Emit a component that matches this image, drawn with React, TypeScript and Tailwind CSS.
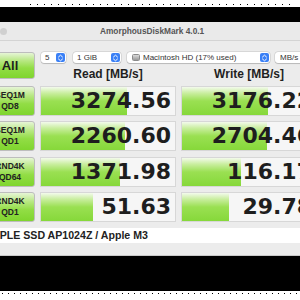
import React from "react";

const rows = [
  { l1: "SEQ1M", l2: "QD8", r: "3274.56", rw: 86, w: "3176.22", ww: 86 },
  { l1: "SEQ1M", l2: "QD1", r: "2260.60", rw: 84, w: "2704.46", ww: 85 },
  { l1: "RND4K", l2: "QD64", r: "1371.98", rw: 79, w: "116.17", ww: 59 },
  { l1: "RND4K", l2: "QD1", r: "51.63", rw: 52, w: "29.78", ww: 47 },
];

function Stepper() {
  return (
    <div className="w-[9px] h-[9px] rounded-[2px] bg-[#3a80f6] flex items-center justify-center shrink-0">
      <svg width="7" height="8" viewBox="0 0 7 8" fill="none">
        <path d="M1.5 3 L3.5 1.2 L5.5 3" stroke="white" strokeWidth="1" strokeLinecap="round" strokeLinejoin="round" />
        <path d="M1.5 5 L3.5 6.8 L5.5 5" stroke="white" strokeWidth="1" strokeLinecap="round" strokeLinejoin="round" />
      </svg>
    </div>
  );
}

function Cell({ value, bar }: { value: string; bar: number }) {
  return (
    <div className="grid h-[30px] border border-[#d7d7d7] bg-[#f6f6f6]">
      <div className="col-start-1 row-start-1 h-full bg-[linear-gradient(to_bottom,#f3faec_0%,#c9ee9f_22%,#9ae052_50%,#86d83a_100%)]" style={{ width: bar }} />
      <div className="col-start-1 row-start-1 flex items-center justify-end pr-[4px] font-['DejaVu_Sans',sans-serif] font-bold text-[22px] leading-none text-[#1e1e1e] whitespace-nowrap">
        {value}
      </div>
    </div>
  );
}

const selectCls =
  "h-[11px] shrink-0 bg-white rounded-[3px] shadow-[0_0_0_0.5px_rgba(0,0,0,0.15),0_0.5px_1px_rgba(0,0,0,0.15)] flex items-center";

export default function App() {
  return (
    <div className="w-[300px] h-[300px] overflow-hidden bg-white flex flex-col font-['Liberation_Sans',Arial,sans-serif]">
      <div className="h-[7px] shrink-0 pt-[4px]">
        <div className="h-[1px] bg-[repeating-linear-gradient(90deg,#000_0px,#000_1px,transparent_1px,transparent_7px)] ml-[30px] mr-[4px]" />
      </div>
      <div className="h-[15px] shrink-0 bg-black" />
      <div className="ml-[-22px] w-[360px] shrink-0 bg-[#ececec] border-b border-[#c9c9c9]">
        <div className="h-[19px] flex items-center border-b border-[#d4d4d4] bg-[#eaeaea]">
          <div className="ml-[22px] w-[7px] h-[7px] rounded-full bg-[#d0d0d0] shrink-0" />
          <span className="ml-[93px] text-[8.3px] font-bold text-[#555] whitespace-nowrap">AmorphousDiskMark 4.0.1</span>
        </div>
        <div className="pl-[7px] pt-[11px] pb-[12px]">
          <div className="flex gap-[5px]">
            <div className="w-[50px] h-[27px] shrink-0 rounded-[3px] border border-[#bdbdbd] bg-[linear-gradient(to_bottom,#e6f5d6_0%,#b9e885_30%,#92dd45_60%,#7fd52e_100%)] flex items-center justify-center text-[13px] font-bold text-[#1f1f1f]">
              All
            </div>
            <div className="flex flex-col w-[277px] shrink-0">
              <div className="flex h-[11px] pl-[1px] text-[8px] text-[#333]">
                <div className={`${selectCls} w-[25px] justify-between pl-[4px] pr-[1px]`}>
                  <span>5</span>
                  <Stepper />
                </div>
                <div className={`${selectCls} ml-[7px] w-[48px] justify-between pl-[4px] pr-[1px]`}>
                  <span>1 GiB</span>
                  <Stepper />
                </div>
                <div className={`${selectCls} ml-[6px] w-[143px] justify-between pl-[5px] pr-[1px]`}>
                  <span className="flex items-center gap-[3px] whitespace-nowrap">
                    <span className="w-[8px] h-[7px] rounded-[1.5px] bg-[linear-gradient(to_bottom,#d9d9d9,#9a9a9a)] border border-[#8a8a8a]" />
                    Macintosh HD (17% used)
                  </span>
                  <Stepper />
                </div>
                <div className={`${selectCls} ml-[5px] w-[60px] pl-[5px]`}>
                  <span>MB/s</span>
                </div>
              </div>
              <div className="grid grid-cols-[136px_136px] gap-x-[5px] mt-[4px] h-[14px] text-[12px] leading-[14px] font-bold text-[#1f1f1f]">
                <div className="text-center">Read [MB/s]</div>
                <div className="text-center">Write [MB/s]</div>
              </div>
            </div>
          </div>
          <div className="mt-[5px] grid grid-cols-[50px_136px_136px] gap-x-[5px] gap-y-[5.33px]">
            {rows.map((r, i) => (
              <React.Fragment key={i}>
                <div className="h-[30px] rounded-[3px] border border-[#bdbdbd] bg-[linear-gradient(to_bottom,#e6f5d6_0%,#b9e885_30%,#92dd45_60%,#7fd52e_100%)] flex flex-col items-center justify-center text-[8.5px] leading-[11px] font-bold text-[#222]">
                  <span>{r.l1}</span>
                  <span>{r.l2}</span>
                </div>
                <Cell value={r.r} bar={r.rw} />
                <Cell value={r.w} bar={r.ww} />
              </React.Fragment>
            ))}
          </div>
          <div className="mt-[6px] ml-[-2px] h-[15px] bg-white flex items-center pl-[2px] text-[10.6px] font-bold text-[#222] whitespace-nowrap">
            APPLE SSD AP1024Z / Apple M3
          </div>
        </div>
      </div>
      <div className="h-[35px] shrink-0 bg-black" />
      <div className="flex-1 pt-[2px]">
        <div className="h-[1px] bg-[repeating-linear-gradient(90deg,#000_0px,#000_1px,transparent_1px,transparent_6px)] mx-[2px]" />
      </div>
    </div>
  );
}
